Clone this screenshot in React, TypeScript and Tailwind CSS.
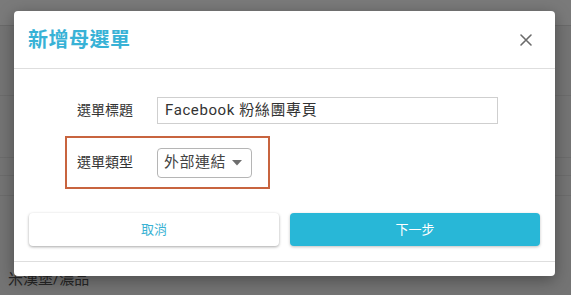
export default function App() {
  const font = "font-['Roboto','Noto_Sans_CJK_TC',sans-serif]";

  return (
    <div className={`relative h-[295px] w-[571px] overflow-hidden bg-[#747474] ${font}`}>
      {/* background page rows under the overlay */}
      <div className="flex flex-col">
        <div className="h-[26px] border-b border-[#6a6a6a] bg-[#7a7a7a]" />
        <div className="h-[70px] border-b border-[#6c6c6c]" />
        <div className="h-[62px] border-b border-[#6c6c6c]" />
        <div className="h-[18px] border-b border-[#6c6c6c]" />
        <div className="h-[20px] border-b border-[#6c6c6c]" />
        <div className="h-[73px]" />
        <div className="pl-[8px] text-[15px] leading-[20px] text-[#262626]">
          米漢堡/濃品
        </div>
      </div>

      {/* modal */}
      <div className="absolute left-[14px] top-[11px] flex w-[541px] flex-col rounded-[4px] bg-white shadow-[0_4px_16px_rgba(0,0,0,0.35)]">
        <div className="flex h-[58px] items-center justify-between border-b border-[#dedede] pl-[14px] pr-[22px]">
          <h2 className="text-[20px] font-semibold leading-none tracking-[0.5px] text-[#38b2d6]">
            新增母選單
          </h2>
          <svg width="14" height="14" viewBox="0 0 14 14" className="text-[#6b6b6b]">
            <path d="M2 2 L12 12 M12 2 L2 12" stroke="currentColor" strokeWidth="1.6" strokeLinecap="round" />
          </svg>
        </div>

        <div className="flex flex-col pt-[28px] pb-[24px]">
          <div className="flex items-center pl-[63px]">
            <span className="w-[80px] text-[14px] text-[#333]">選單標題</span>
            <div className="flex h-[27px] w-[341px] items-center border border-[#cfcfcf] px-[7px] text-[15px] tracking-[0.6px] text-[#333]">
              Facebook 粉絲團專頁
            </div>
          </div>

          <div className="ml-[51px] mt-[12px] flex h-[53px] w-[205px] items-center border-2 border-[#c8643f] pl-[10px]">
            <span className="w-[80px] text-[14px] text-[#333]">選單類型</span>
            <div className="flex h-[30px] w-[95px] items-center justify-between rounded-[4px] border border-[#b5b5b5] pl-[6px] pr-[9px] text-[15px] tracking-[0.5px] text-[#444]">
              外部連結
              <svg width="10" height="6" viewBox="0 0 10 6">
                <path d="M0 0 L10 0 L5 5.5 Z" fill="#6e6e6e" />
              </svg>
            </div>
          </div>
        </div>

        <div className="flex gap-[11px] border-b border-[#dedede] px-[15px] pb-[15px]">
          <button className="flex h-[33px] flex-1 items-center justify-center rounded-[4px] bg-white text-[13px] text-[#3ab2d3] shadow-[0_1px_3px_rgba(0,0,0,0.35)]">
            取消
          </button>
          <button className="flex h-[33px] flex-1 items-center justify-center rounded-[4px] bg-[#28b7d7] text-[13px] text-white shadow-[0_1px_3px_rgba(0,0,0,0.25)]">
            下一步
          </button>
        </div>
        <div className="h-[14px]" />
      </div>
    </div>
  );
}
